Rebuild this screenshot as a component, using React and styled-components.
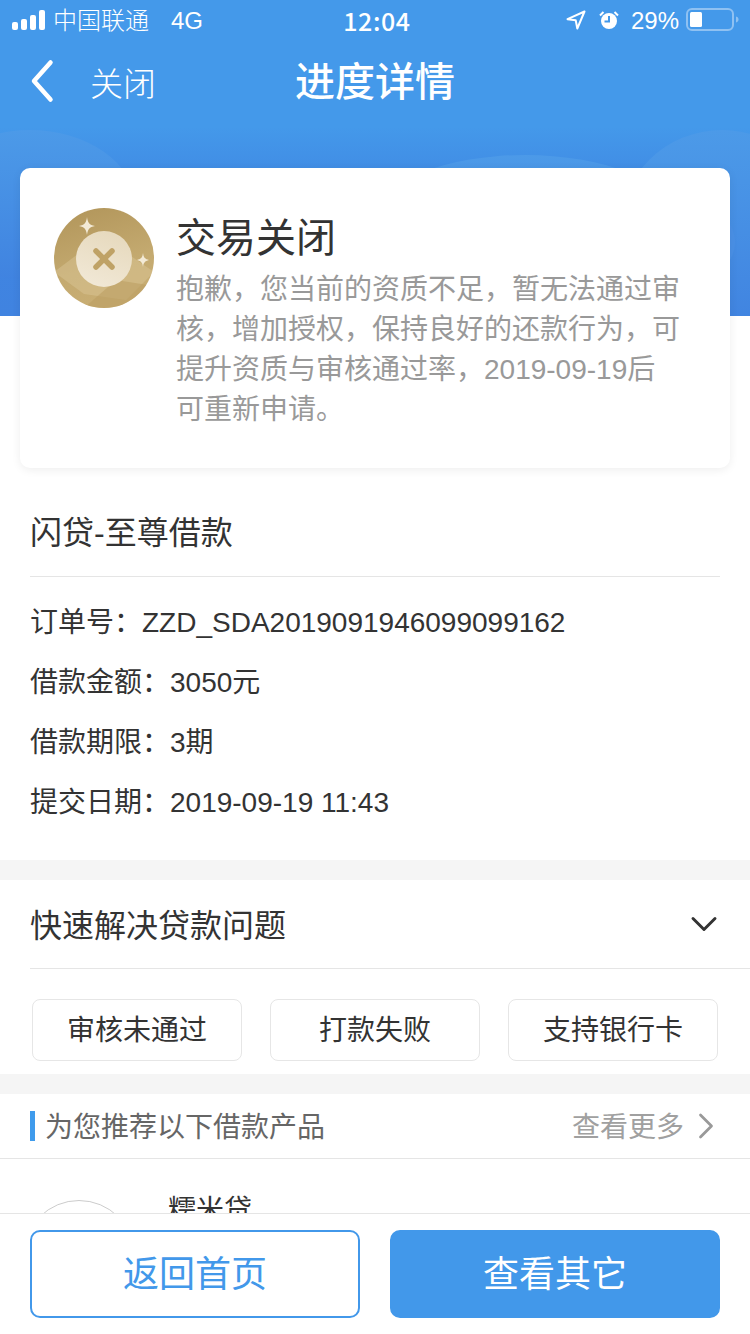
import React from "react";
import styled, { createGlobalStyle } from "styled-components";
import { ChevronDown, ChevronRight } from "lucide-react";

const GlobalStyle = createGlobalStyle`
  html, body {
    margin: 0;
    padding: 0;
    background: #fff;
  }
  * {
    box-sizing: border-box;
  }
`;

const Page = styled.div`
  width: 750px;
  height: 1334px;
  display: flex;
  flex-direction: column;
  overflow: hidden;
  background: #fff;
  color: #333;
  font-family: "Liberation Sans", "Noto Sans CJK SC", sans-serif;
`;

const Content = styled.main`
  flex: 1;
  min-height: 0;
  overflow: hidden;
`;

const Hero = styled.header`
  position: relative;
  padding: 0 20px;
`;

const HeroArt = styled.svg`
  position: absolute;
  left: 0;
  top: 0;
  width: 750px;
  height: 316px;
`;

const StatusBar = styled.div`
  position: relative;
  height: 40px;
  margin: 0 -20px;
  padding: 0 11px 0 12px;
  display: grid;
  grid-template-columns: 1fr auto 1fr;
  align-items: center;
  color: #fff;
  font-size: 24px;
`;

const StatusSide = styled.div`
  display: flex;
  align-items: center;
  justify-content: ${(props) => (props.$end ? "flex-end" : "flex-start")};
`;

const Carrier = styled.span`
  margin: -4px 0 0 8px;
  font-weight: 300;
`;

const Network = styled.span`
  margin-left: 22px;
  padding-top: 2px;
`;

const Clock = styled.span`
  margin-left: 3px;
  font-family: "Noto Sans CJK SC", sans-serif;
  font-size: 25px;
  font-weight: 500;
  letter-spacing: 0.6px;
`;

const Percent = styled.span`
  margin: 0 7px 0 12px;
  padding-top: 2px;
`;

const NavBar = styled.nav`
  position: relative;
  height: 84px;
  margin: 0 -20px;
  padding: 0 0 2px 30px;
  display: flex;
  align-items: center;
  color: #fff;
`;

const BackLink = styled.div`
  display: flex;
  align-items: center;
  font-size: 33px;
  font-weight: 300;
`;

const BackLabel = styled.span`
  margin-left: 36px;
  padding-top: 2px;
`;

const NavTitle = styled.h1`
  position: absolute;
  left: 0;
  right: 0;
  margin: 0;
  padding-bottom: 4px;
  text-align: center;
  font-size: 40px;
  font-weight: 500;
`;

const ResultCard = styled.section`
  position: relative;
  height: 300px;
  margin-top: 44px;
  padding: 40px 34px 0;
  display: flex;
  gap: 22px;
  background: #fff;
  border-radius: 10px;
  box-shadow: 0 2px 10px rgba(0, 0, 0, 0.07);
`;

const ResultBody = styled.div`
  width: 504px;
`;

const ResultTitle = styled.h2`
  margin: 6px 0 8px;
  font-size: 40px;
  line-height: 48px;
  font-weight: 400;
  color: #333;
`;

const ResultText = styled.p`
  margin: 0;
  font-size: 28px;
  line-height: 40px;
  color: #999;
`;

const OrderSection = styled.section`
  padding: 40px 30px 27px;
  border-bottom: 20px solid #f5f5f5;
`;

const ProductName = styled.h3`
  margin: 0;
  height: 69px;
  font-size: 32px;
  line-height: 50px;
  font-weight: 400;
  border-bottom: 1px solid #e5e5e5;
`;

const OrderList = styled.div`
  padding-top: 16px;
`;

const OrderRow = styled.div`
  height: 60px;
  font-size: 28px;
  line-height: 60px;
  color: #333;
`;

const HelpSection = styled.section`
  padding-left: 30px;
  border-bottom: 20px solid #f5f5f5;
`;

const HelpHeader = styled.div`
  height: 89px;
  padding-right: 24px;
  display: flex;
  align-items: center;
  justify-content: space-between;
  border-bottom: 1px solid #e5e5e5;
`;

const HelpTitle = styled.h3`
  margin: 0 0 2px;
  font-size: 32px;
  font-weight: 400;
`;

const TagRow = styled.div`
  padding: 30px 32px 13px 2px;
  display: flex;
  justify-content: space-between;
`;

const Tag = styled.button`
  width: 210px;
  height: 62px;
  padding: 0 0 4px;
  background: #fff;
  border: 1px solid #e6e6e6;
  border-radius: 8px;
  color: #333;
  font: inherit;
  font-size: 28px;
`;

const RecommendHeader = styled.div`
  height: 65px;
  padding: 0 22px 0 30px;
  display: flex;
  align-items: center;
  justify-content: space-between;
  border-bottom: 1px solid #e5e5e5;
`;

const RecommendTitle = styled.h3`
  height: 30px;
  margin: 0;
  padding-left: 10px;
  border-left: 5px solid #3f9bec;
  font-size: 28px;
  line-height: 34px;
  font-weight: 400;
  color: #666;
`;

const MoreLink = styled.div`
  display: flex;
  align-items: center;
  font-size: 28px;
  color: #a0a0a0;
`;

const MoreLabel = styled.span`
  padding-bottom: 2px;
`;

const LoanItem = styled.div`
  padding: 41px 30px 0 23px;
  display: flex;
  gap: 33px;
`;

const LoanLogo = styled.div`
  width: 112px;
  height: 112px;
  border: 1px solid #ccc;
  border-radius: 50%;
`;

const LoanName = styled.div`
  margin-top: -9px;
  font-size: 28px;
  line-height: 40px;
`;

const Footer = styled.footer`
  height: 121px;
  padding: 16px 30px 0;
  display: flex;
  gap: 30px;
  background: #fff;
  border-top: 1px solid #e5e5e5;
`;

const FooterButton = styled.button`
  flex: 1;
  height: 88px;
  padding: 0 0 6px;
  border: 2px solid #4298ea;
  border-radius: 10px;
  background: ${(props) => (props.$primary ? "#4298ea" : "#fff")};
  color: ${(props) => (props.$primary ? "#fff" : "#4298ea")};
  font: inherit;
  font-size: 36px;
`;

function SignalBars() {
  return (
    <svg width="33" height="20" viewBox="0 0 33 20" fill="#fff">
      <rect x="0" y="12" width="6" height="8" rx="2" />
      <rect x="9" y="9" width="6" height="11" rx="2" />
      <rect x="18" y="5" width="6" height="15" rx="2" />
      <rect x="27" y="0" width="6" height="20" rx="2" />
    </svg>
  );
}

function LocationArrow() {
  return (
    <svg width="20" height="20" viewBox="0 0 20 20" fill="none">
      <path d="M18.500 1.500 1.500 9.200l8.200 1 1.600 8.300z" stroke="#fff" strokeWidth="2" strokeLinejoin="round" />
    </svg>
  );
}

function AlarmClock() {
  return (
    <svg width="20" height="20" viewBox="0 0 20 20" style={{ marginLeft: 13 }}>
      <circle cx="10" cy="11" r="8" fill="#fff" />
      <path d="M10 6v5.500H5.500" fill="none" stroke="#4298ea" strokeWidth="2" />
      <path d="M1 5.500 4.500 2M19 5.500 15.500 2" stroke="#fff" strokeWidth="2" />
    </svg>
  );
}

function Battery() {
  return (
    <svg width="53" height="24" viewBox="0 0 53 24">
      <rect x="1" y="1" width="46" height="21" rx="5" fill="none" stroke="#8fc1f2" strokeWidth="2" />
      <rect x="4" y="4" width="12" height="15" rx="1.500" fill="#fff" />
      <path d="M50 8.500c1.800.4 2.500 1.600 2.500 3s-.7 2.600-2.500 3z" fill="#8fc1f2" />
    </svg>
  );
}

function BackArrow() {
  return (
    <svg width="24" height="44" viewBox="0 0 24 44" fill="none">
      <path d="M20.500 3.500 4 22l16.500 18.500" stroke="#fff" strokeWidth="4.500" strokeLinecap="round" strokeLinejoin="round" />
    </svg>
  );
}

function HeroBackground() {
  return (
    <HeroArt viewBox="0 0 750 316" preserveAspectRatio="none">
      <defs>
        <linearGradient id="sky" x1="0" y1="0" x2="0" y2="1">
          <stop offset="0" stopColor="#4499ea" />
          <stop offset="0.4" stopColor="#4499ea" />
          <stop offset="0.62" stopColor="#3f86e2" />
          <stop offset="1" stopColor="#4083e0" />
        </linearGradient>
        <linearGradient id="hill" x1="0" y1="0" x2="0" y2="1">
          <stop offset="0" stopColor="#4c9ae8" />
          <stop offset="1" stopColor="#4083e0" />
        </linearGradient>
      </defs>
      <rect width="750" height="316" fill="url(#sky)" />
      <ellipse cx="30" cy="205" rx="105" ry="75" fill="url(#hill)" />
      <ellipse cx="525" cy="215" rx="145" ry="60" fill="url(#hill)" />
      <ellipse cx="722" cy="230" rx="102" ry="100" fill="url(#hill)" />
      <circle cx="700" cy="242" r="35" fill="#4a90e6" />
    </HeroArt>
  );
}

function ClosedBadge() {
  return (
    <svg width="100" height="100" viewBox="0 0 100 100" style={{ flex: "none" }}>
      <defs>
        <linearGradient id="gold" x1="0.3" y1="0" x2="0.6" y2="1">
          <stop offset="0" stopColor="#b3975c" />
          <stop offset="0.6" stopColor="#c4aa70" />
          <stop offset="1" stopColor="#c9ae74" />
        </linearGradient>
        <linearGradient id="pearl" x1="0.7" y1="0" x2="0.3" y2="1">
          <stop offset="0" stopColor="#e6d9bd" />
          <stop offset="1" stopColor="#f1e8d6" />
        </linearGradient>
        <clipPath id="disc">
          <circle cx="50" cy="50" r="50" />
        </clipPath>
      </defs>
      <circle cx="50" cy="50" r="50" fill="url(#gold)" />
      <g clipPath="url(#disc)">
        <path d="M0 64 48 28 100 64 72 92 30 86z" fill="#dcc798" opacity="0.45" />
        <path d="M30 100 62 72 100 78 100 100z" fill="#b99c60" opacity="0.55" />
      </g>
      <circle cx="50" cy="51" r="28" fill="url(#pearl)" />
      <path d="M42 43 58 59M58 43 42 59" stroke="#bfa266" strokeWidth="5.500" strokeLinecap="round" />
      <path d="M33 9c.7 5.500 2.300 8 8 9-5.700 1-7.300 3.500-8 9-.7-5.500-2.300-8-8-9 5.700-1 7.300-3.500 8-9z" fill="#f3ead6" />
      <path d="M89 45c.5 4 1.700 6 6 7-4.300 1-5.500 3-6 7-.5-4-1.700-6-6-7 4.300-1 5.500-3 6-7z" fill="#f3ead6" />
    </svg>
  );
}

const orderRows = [
  "订单号：ZZD_SDA2019091946099099162",
  "借款金额：3050元",
  "借款期限：3期",
  "提交日期：2019-09-19 11:43",
];

const helpTags = ["审核未通过", "打款失败", "支持银行卡"];

export default function App() {
  return (
    <Page>
      <GlobalStyle />
      <Content>
        <Hero>
          <HeroBackground />
          <StatusBar>
            <StatusSide>
              <SignalBars />
              <Carrier>中国联通</Carrier>
              <Network>4G</Network>
            </StatusSide>
            <Clock>12:04</Clock>
            <StatusSide $end>
              <LocationArrow />
              <AlarmClock />
              <Percent>29%</Percent>
              <Battery />
            </StatusSide>
          </StatusBar>
          <NavBar>
            <BackLink>
              <BackArrow />
              <BackLabel>关闭</BackLabel>
            </BackLink>
            <NavTitle>进度详情</NavTitle>
          </NavBar>
          <ResultCard>
            <ClosedBadge />
            <ResultBody>
              <ResultTitle>交易关闭</ResultTitle>
              <ResultText>
                抱歉，您当前的资质不足，暂无法通过审核，增加授权，保持良好的还款行为，可提升资质与审核通过率，2019-09-19后可重新申请。
              </ResultText>
            </ResultBody>
          </ResultCard>
        </Hero>

        <OrderSection>
          <ProductName>闪贷-至尊借款</ProductName>
          <OrderList>
            {orderRows.map((row) => (
              <OrderRow key={row}>{row}</OrderRow>
            ))}
          </OrderList>
        </OrderSection>

        <HelpSection>
          <HelpHeader>
            <HelpTitle>快速解决贷款问题</HelpTitle>
            <ChevronDown size={44} strokeWidth={1.6} color="#333" />
          </HelpHeader>
          <TagRow>
            {helpTags.map((tag) => (
              <Tag key={tag}>{tag}</Tag>
            ))}
          </TagRow>
        </HelpSection>

        <RecommendHeader>
          <RecommendTitle>为您推荐以下借款产品</RecommendTitle>
          <MoreLink>
            <MoreLabel>查看更多</MoreLabel>
            <ChevronRight size={44} strokeWidth={1.5} color="#999" />
          </MoreLink>
        </RecommendHeader>
        <LoanItem>
          <LoanLogo />
          <LoanName>糯米贷</LoanName>
        </LoanItem>
      </Content>

      <Footer>
        <FooterButton>返回首页</FooterButton>
        <FooterButton $primary>查看其它</FooterButton>
      </Footer>
    </Page>
  );
}
